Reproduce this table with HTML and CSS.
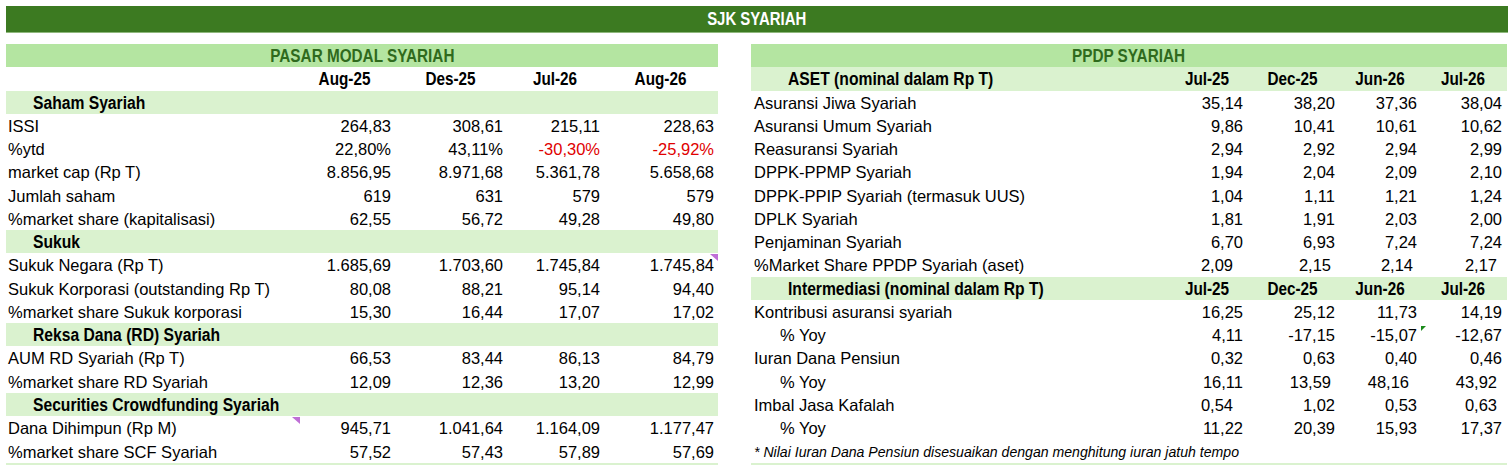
FILE: index.html
```html
<!DOCTYPE html>
<html lang="id">
<head>
<meta charset="utf-8">
<title>SJK Syariah</title>
<link rel="stylesheet" href="styles.css">
</head>
<body>
<div class="banner"><b class="cx">SJK SYARIAH</b></div>
<div class="panels">
  <section class="panel left">
    <div class="ptitle"><b class="cx">PASAR MODAL SYARIAH</b></div>
    <div class="row colhdr"><span></span><span><b class="cx">Aug-25</b></span><span><b class="cx">Des-25</b></span><span><b class="cx">Jul-26</b></span><span><b class="cx">Aug-26</b></span></div>
    <div class="row sec"><span class="lbl"><b class="cx">Saham Syariah</b></span></div>
    <div class="row"><span class="lbl">ISSI</span><span>264,83</span><span>308,61</span><span>215,11</span><span>228,63</span></div>
    <div class="row"><span class="lbl">%ytd</span><span>22,80%</span><span>43,11%</span><span class="neg">-30,30%</span><span class="neg">-25,92%</span></div>
    <div class="row"><span class="lbl">market cap (Rp T)</span><span>8.856,95</span><span>8.971,68</span><span>5.361,78</span><span>5.658,68</span></div>
    <div class="row"><span class="lbl">Jumlah saham</span><span>619</span><span>631</span><span>579</span><span>579</span></div>
    <div class="row"><span class="lbl">%market share (kapitalisasi)</span><span>62,55</span><span>56,72</span><span>49,28</span><span>49,80</span></div>
    <div class="row sec"><span class="lbl"><b class="cx">Sukuk</b></span></div>
    <div class="row"><span class="lbl">Sukuk Negara (Rp T)</span><span>1.685,69</span><span>1.703,60</span><span>1.745,84</span><span class="mark">1.745,84<i class="tri purple"></i></span></div>
    <div class="row"><span class="lbl">Sukuk Korporasi (outstanding Rp T)</span><span>80,08</span><span>88,21</span><span>95,14</span><span>94,40</span></div>
    <div class="row"><span class="lbl">%market share Sukuk korporasi</span><span>15,30</span><span>16,44</span><span>17,07</span><span>17,02</span></div>
    <div class="row sec"><span class="lbl"><b class="cx">Reksa Dana (RD) Syariah</b></span></div>
    <div class="row"><span class="lbl">AUM RD Syariah (Rp T)</span><span>66,53</span><span>83,44</span><span>86,13</span><span>84,79</span></div>
    <div class="row"><span class="lbl">%market share RD Syariah</span><span>12,09</span><span>12,36</span><span>13,20</span><span>12,99</span></div>
    <div class="row sec"><span class="lbl"><b class="cx">Securities Crowdfunding Syariah</b></span></div>
    <div class="row"><span class="lbl mark">Dana Dihimpun (Rp M)<i class="tri purple pl"></i></span><span>945,71</span><span>1.041,64</span><span>1.164,09</span><span>1.177,47</span></div>
    <div class="row last"><span class="lbl">%market share SCF Syariah</span><span>57,52</span><span>57,43</span><span>57,89</span><span>57,69</span></div>
  </section>

  <section class="panel right">
    <div class="ptitle"><b class="cx">PPDP SYARIAH</b></div>
    <div class="row sec hdr"><span class="lbl"><b class="cx">ASET (nominal dalam Rp T)</b></span><span><b class="cx">Jul-25</b></span><span><b class="cx">Dec-25</b></span><span><b class="cx">Jun-26</b></span><span><b class="cx">Jul-26</b></span></div>
    <div class="row"><span class="lbl">Asuransi Jiwa Syariah</span><span>35,14</span><span>38,20</span><span>37,36</span><span>38,04</span></div>
    <div class="row"><span class="lbl">Asuransi Umum Syariah</span><span>9,86</span><span>10,41</span><span>10,61</span><span>10,62</span></div>
    <div class="row"><span class="lbl">Reasuransi Syariah</span><span>2,94</span><span>2,92</span><span>2,94</span><span>2,99</span></div>
    <div class="row"><span class="lbl">DPPK-PPMP Syariah</span><span>1,94</span><span>2,04</span><span>2,09</span><span>2,10</span></div>
    <div class="row"><span class="lbl">DPPK-PPIP Syariah (termasuk UUS)</span><span>1,04</span><span>1,11</span><span>1,21</span><span>1,24</span></div>
    <div class="row"><span class="lbl">DPLK Syariah</span><span>1,81</span><span>1,91</span><span>2,03</span><span>2,00</span></div>
    <div class="row"><span class="lbl">Penjaminan Syariah</span><span>6,70</span><span>6,93</span><span>7,24</span><span>7,24</span></div>
    <div class="row"><span class="lbl">%Market Share PPDP Syariah (aset)</span><span class="in10">2,09</span><span class="in4">2,15</span><span class="in4">2,14</span><span class="in5">2,17</span></div>
    <div class="row sec hdr"><span class="lbl"><b class="cx">Intermediasi (nominal dalam Rp T)</b></span><span><b class="cx">Jul-25</b></span><span><b class="cx">Dec-25</b></span><span><b class="cx">Jun-26</b></span><span><b class="cx">Jul-26</b></span></div>
    <div class="row"><span class="lbl">Kontribusi asuransi syariah</span><span>16,25</span><span>25,12</span><span>11,73</span><span>14,19</span></div>
    <div class="row"><span class="lbl sub">% Yoy</span><span>4,11</span><span>-17,15</span><span>-15,07</span><span class="mark">-12,67<i class="tri green"></i></span></div>
    <div class="row"><span class="lbl">Iuran Dana Pensiun</span><span>0,32</span><span>0,63</span><span>0,40</span><span>0,46</span></div>
    <div class="row"><span class="lbl sub">% Yoy</span><span>16,11</span><span class="in4">13,59</span><span class="in5">48,16</span><span class="in5">43,92</span></div>
    <div class="row"><span class="lbl">Imbal Jasa Kafalah</span><span class="in10">0,54</span><span>1,02</span><span>0,53</span><span class="in5">0,63</span></div>
    <div class="row"><span class="lbl sub">% Yoy</span><span>11,22</span><span>20,39</span><span>15,93</span><span>17,37</span></div>
    <div class="row note last"><span class="lbl">* Nilai Iuran Dana Pensiun disesuaikan dengan menghitung iuran jatuh tempo</span></div>
  </section>
</div>
</body>
</html>
```

FILE: styles.css
```css
html, body {
  margin: 0;
  padding: 0;
  background: #ffffff;
}
body {
  width: 1512px;
  height: 471px;
  overflow: hidden;
  font-family: "Liberation Sans", Arial, sans-serif;
  font-size: 16.5px;
  color: #000;
}
/* condensed bold, imitating Arial Narrow Bold */
.cx {
  display: inline-block;
  font-family: "Liberation Sans", Arial, sans-serif;
  font-weight: bold;
  font-size: 18px;
  transform: scaleX(0.85);
  transform-origin: center;
}
.banner {
  margin: 6px 4px 0 6px;
  height: 26px;
  line-height: 27px;
  background: #3c7a21;
  color: #fff;
  text-align: center;
  border-bottom: 1px solid #8fb87d;
}
.banner .cx { font-size: 18px; transform: scaleX(0.83); }
.panels {
  display: flex;
  gap: 33px;
  margin: 11px 0 0 6px;
}
.panel {
  display: flex;
  flex-direction: column;
}
.left { width: 712px; --cols: 286px 101px 112px 97px 116px; }
.right { width: 756px; --cols: 414px 80px 92px 82px 88px; }

.ptitle {
  height: 23.3px;
  line-height: 25px;
  background: #b4e5a1;
  color: #2f6a1d;
  text-align: center;
}
.row {
  display: grid;
  grid-template-columns: var(--cols);
  height: 23.28px;
  line-height: 25px;
  white-space: nowrap;
}
.row > span {
  text-align: right;
  padding-right: 2px;
  position: relative;
}
.row > span:last-child { padding-right: 4px; }
.right .row > span:last-child { padding-right: 5px; }
.row > span.lbl {
  text-align: left;
  padding-left: 2px;
  padding-right: 0;
}
.right .row > span.lbl { padding-left: 3px; }
.colhdr > span,
.hdr > span {
  text-align: center;
  padding-left: 6px;
}
.sec { background: #daf2cf; }
.sec > span.lbl { padding-left: 27px; }
.right .sec > span.lbl { padding-left: 37px; }
.sec > span.lbl .cx { transform-origin: left center; transform: scaleX(0.87); }
.right .row > span.sub { padding-left: 29px; }
.neg { color: #e00000; }
.in4 { padding-right: 6px !important; }
.in5 { padding-right: 10px !important; }
.in10 { padding-right: 12px !important; }
.note > span.lbl {
  font-style: italic;
  font-size: 14.1px;
  grid-column: 1 / -1;
}
.last { border-bottom: 2px solid #daf2cf; }

.tri {
  position: absolute;
  top: 1px;
  width: 0;
  height: 0;
}
.tri.purple {
  right: 0;
  border-top: 7px solid #bf6fd6;
  border-left: 8px solid transparent;
}
.tri.purple.pl { right: -8px; left: auto; }
.tri.green {
  left: 2px;
  top: 3px;
  border-top: 5px solid #1b8a1b;
  border-right: 5px solid transparent;
}
```
